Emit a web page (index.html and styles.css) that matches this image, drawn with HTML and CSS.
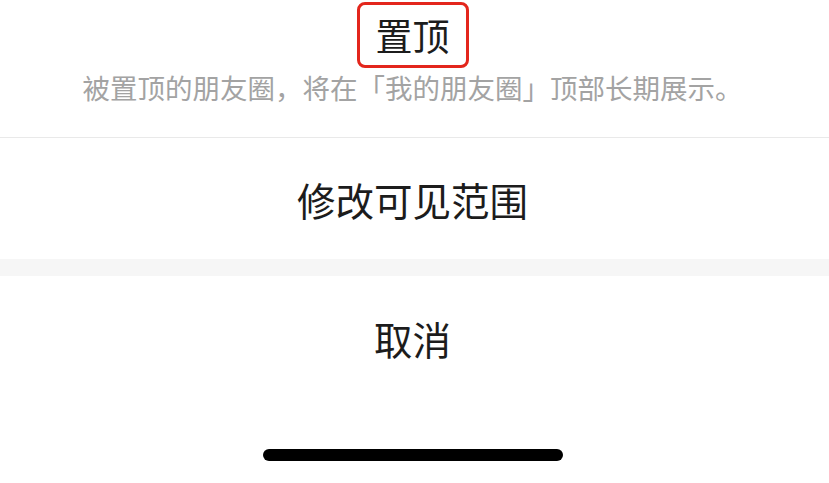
FILE: index.html
```html
<!DOCTYPE html>
<html lang="zh-CN">
<head>
    <meta charset="UTF-8">
    <meta name="viewport" content="width=device-width, initial-scale=1.0">
    <title>置顶</title>
    <link rel="stylesheet" href="styles.css">
</head>
<body>
    <div class="sheet">
        <div class="top-option">
            <span class="title-mark">置顶</span>
            <p class="hint">被置顶的朋友圈，将在「我的朋友圈」顶部长期展示。</p>
        </div>
        <div class="option">修改可见范围</div>
        <div class="divider"></div>
        <div class="option cancel">取消</div>
        <div class="home-bar"></div>
    </div>
</body>
</html>
```
FILE: styles.css
```css
body {
    margin: 0;
    background-color: #fff;
    font-family: "Noto Sans CJK SC", "Noto Sans", sans-serif;
    color: #1c1c1c;
}

.sheet {
    width: 829px;
    height: 483px;
    overflow: hidden;
    display: flex;
    flex-direction: column;
    padding-right: 4px;
    box-sizing: border-box;
}

.top-option {
    height: 138px;
    display: flex;
    flex-direction: column;
    align-items: center;
    padding-top: 2px;
    box-sizing: border-box;
    border-bottom: 1px solid #e9e9e9;
    margin-right: -4px;
    padding-right: 4px;
}

.title-mark {
    display: block;
    font-size: 37px;
    line-height: 60px;
    padding: 0 16px;
    border: 3px solid #e3261c;
    border-radius: 8px;
}

.hint {
    margin: 0;
    font-size: 27.5px;
    line-height: 38px;
    color: #a3a3a3;
}

.option {
    height: 121px;
    display: flex;
    align-items: center;
    justify-content: center;
    font-size: 38.5px;
}

.divider {
    height: 17px;
    background-color: #f6f6f6;
    margin-right: -4px;
}

.cancel {
    height: 124px;
}

.home-bar {
    width: 300px;
    height: 12px;
    margin: 49px auto 0;
    background-color: #000;
    border-radius: 6px;
}
```
